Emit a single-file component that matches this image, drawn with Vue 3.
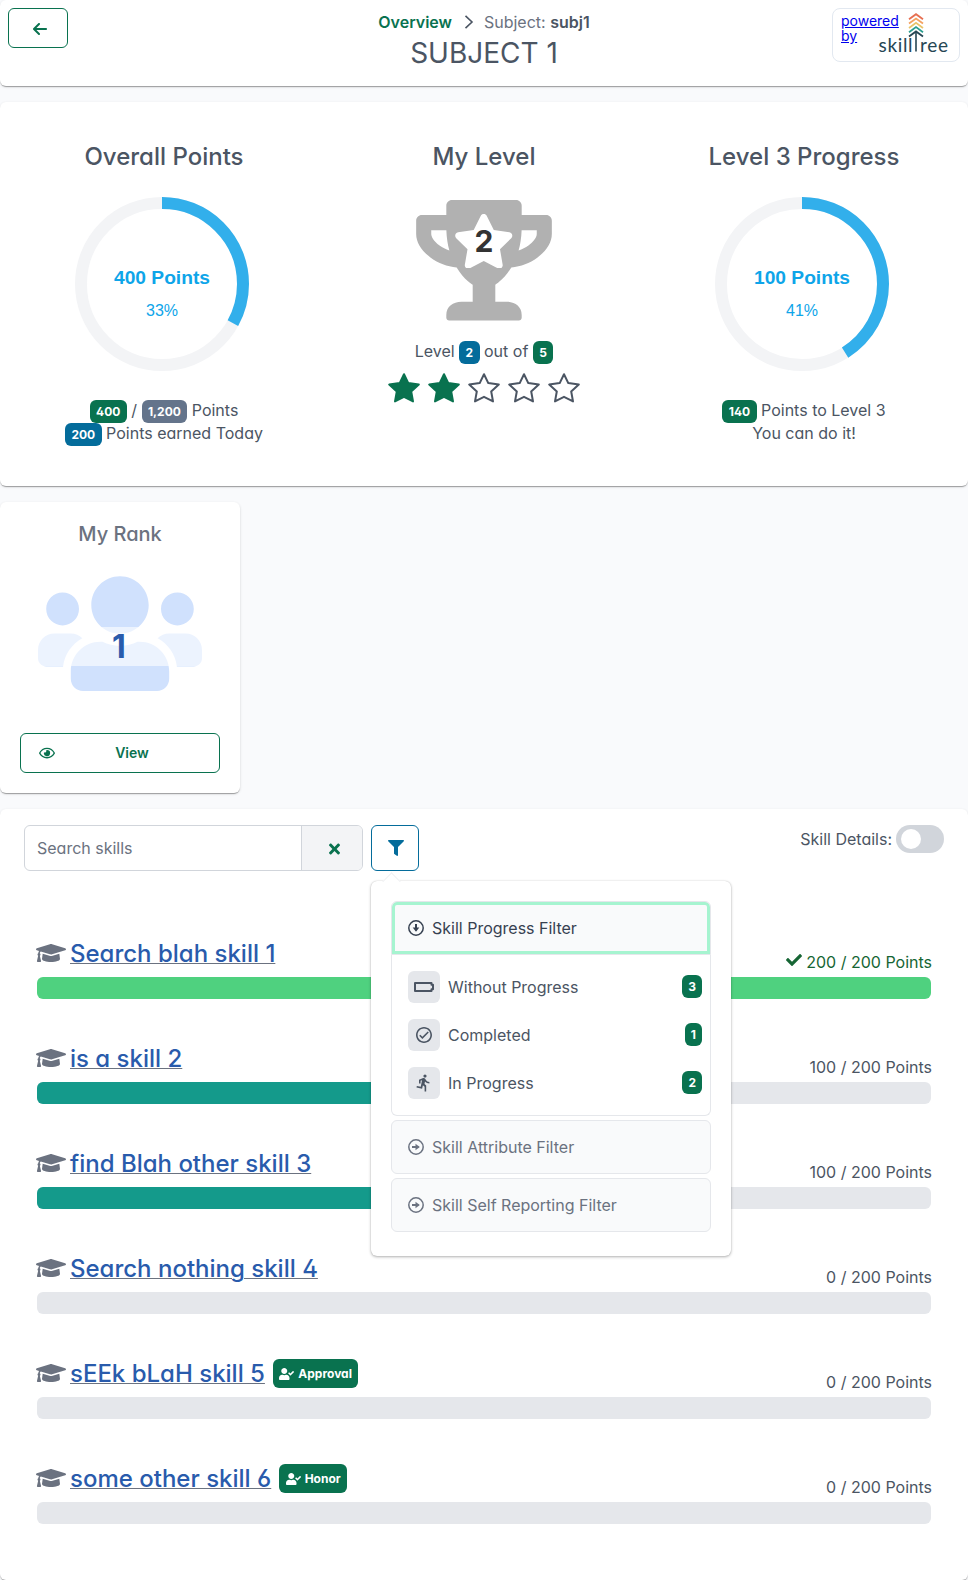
<script setup>
const ringRadius = 81
const ringLength = 2 * Math.PI * ringRadius

const points = { title: 'Overall Points', value: '400 Points', percent: 33 }
const progress = { title: 'Level 3 Progress', value: '100 Points', percent: 41 }

const skills = [
  { name: 'Search blah skill 1', earned: 200, percent: 100 },
  { name: 'is a skill 2', earned: 100, percent: 50 },
  { name: 'find Blah other skill 3', earned: 100, percent: 50 },
  { name: 'Search nothing skill 4', earned: 0, percent: 0 },
  { name: 'sEEk bLaH skill 5', earned: 0, percent: 0, tag: 'Approval' },
  { name: 'some other skill 6', earned: 0, percent: 0, tag: 'Honor' },
]

const filters = [
  { label: 'Without Progress', count: 3, icon: 'battery' },
  { label: 'Completed', count: 1, icon: 'check' },
  { label: 'In Progress', count: 2, icon: 'run' },
]

const logoChevrons = [
  { y: 0, color: '#e76f51' },
  { y: 4.3, color: '#f4a261' },
  { y: 8.6, color: '#e9c46a' },
  { y: 12.9, color: '#2a9d8f' },
  { y: 17.2, color: '#264653' },
]

const dash = (percent) => `${(ringLength * percent) / 100} ${ringLength}`
</script>

<template>
  <div class="page">
    <header class="card top">
      <button class="outline back" aria-label="Back">
        <svg width="14" height="16" viewBox="0 0 448 512" fill="currentColor"><path d="M9.4 233.4c-12.5 12.5-12.5 32.8 0 45.3l160 160c12.5 12.5 32.8 12.5 45.3 0s12.5-32.8 0-45.3L109.2 288 416 288c17.7 0 32-14.3 32-32s-14.3-32-32-32l-306.7 0L214.6 118.6c12.5-12.5 12.5-32.8 0-45.3s-32.8-12.5-45.3 0l-160 160z"/></svg>
      </button>
      <div class="heading">
        <nav class="crumbs">
          <a class="crumb-link">Overview</a>
          <svg class="crumb-sep" width="10" height="16" viewBox="0 0 10 16" fill="none" stroke="#4b5563" stroke-width="1.6"><path d="M1.5 1.8 8 8l-6.500 6.200"/></svg>
          <span>Subject: <b>subj1</b></span>
        </nav>
        <h1>SUBJECT 1</h1>
      </div>
      <a class="powered">
        <span class="powered-text">powered<br>by</span>
        <svg class="logo" width="72" height="42" viewBox="0 0 72 42">
          <g fill="none" stroke-width="1.8">
            <path v-for="c in logoChevrons" :key="c.color" :stroke="c.color" :transform="`translate(0 ${c.y})`" d="M31 6.300 38 1.200 45 6.300"/>
            <path d="M38 19v19.500" stroke="#264653" stroke-width="1.6"/>
          </g>
          <text x="0.500" y="38.500" textLength="34" class="logo-text">skill</text>
          <text x="42" y="38.500" textLength="28" class="logo-text">ree</text>
        </svg>
      </a>
    </header>

    <section class="card summary">
      <div class="col">
        <h2>{{ points.title }}</h2>
        <svg class="ring" width="176" height="176" viewBox="0 0 176 176">
          <circle cx="88" cy="88" :r="ringRadius" fill="none" stroke="#f3f4f6" stroke-width="12"/>
          <circle cx="88" cy="88" :r="ringRadius" fill="none" stroke="#32afeb" stroke-width="12" :stroke-dasharray="dash(points.percent)" transform="rotate(-90 88 88)"/>
          <text x="88" y="88" class="ring-value">{{ points.value }}</text>
          <text x="88" y="120" class="ring-percent">{{ points.percent }}%</text>
        </svg>
        <div class="notes">
          <div><span class="tag">400</span> / <span class="tag slate">1,200</span> Points</div>
          <div><span class="tag blue">200</span> Points earned Today</div>
        </div>
      </div>

      <div class="col">
        <h2>My Level</h2>
        <div class="trophy">
          <svg width="136" height="120.600" viewBox="0 0 576 512" fill="#b1b1b1"><path d="M552 64H448V24c0-13.300-10.700-24-24-24H152c-13.300 0-24 10.700-24 24v40H24C10.700 64 0 74.700 0 88v56c0 35.700 22.500 72.400 61.900 100.700 31.500 22.700 69.800 37.100 110 41.700C203.300 338.500 240 360 240 360v72h-48c-35.300 0-64 20.700-64 56v12c0 6.600 5.400 12 12 12h296c6.600 0 12-5.400 12-12v-12c0-35.300-28.700-56-64-56h-48v-72s36.700-21.500 68.100-73.600c40.300-4.600 78.600-19 110-41.700 39.300-28.300 61.900-65 61.900-100.700V88c0-13.300-10.700-24-24-24zM99.300 192.800C74.900 175.200 64 155.600 64 144v-16h64.200c1 32.600 5.800 61.200 12.800 86.200-15.100-5.200-29.200-12.400-41.700-21.400zM512 144c0 16.100-17.700 36.100-35.300 48.800-12.500 9-26.700 16.200-41.800 21.400 7-25 11.800-53.600 12.800-86.200H512v16z"/></svg>
          <svg class="trophy-star" width="61.500" height="54.700" viewBox="0 0 576 512" fill="#fff"><path d="M259.300 17.800L194 150.200 47.900 171.500c-26.200 3.800-36.700 36.100-17.700 54.600l105.700 103-25 145.500c-4.500 26.300 23.200 46 46.400 33.700L288 439.600l130.700 68.700c23.200 12.200 50.900-7.400 46.400-33.700l-25-145.500 105.700-103c19-18.500 8.500-50.800-17.700-54.600L382 150.200 316.700 17.800c-11.700-23.600-45.600-23.900-57.400 0z"/></svg>
          <span class="trophy-number">2</span>
        </div>
        <div class="level">Level <span class="tag blue">2</span> out of <span class="tag">5</span></div>
        <div class="stars">
          <svg v-for="n in 5" :key="n" width="32" height="32" viewBox="0 0 32 32" :fill="n <= 2 ? '#09724f' : 'none'" :stroke="n <= 2 ? '#09724f' : '#4b5563'" stroke-width="2" stroke-linejoin="round"><path d="M16 2.200 20.300 11.100 30.800 12.600 23.200 19.500 25 29.400 16 24.800 7 29.400 8.800 19.500 1.200 12.600 11.700 11.100Z"/></svg>
        </div>
      </div>

      <div class="col">
        <h2>{{ progress.title }}</h2>
        <svg class="ring" width="176" height="176" viewBox="0 0 176 176">
          <circle cx="88" cy="88" :r="ringRadius" fill="none" stroke="#f3f4f6" stroke-width="12"/>
          <circle cx="88" cy="88" :r="ringRadius" fill="none" stroke="#32afeb" stroke-width="12" :stroke-dasharray="dash(progress.percent)" transform="rotate(-90 88 88)"/>
          <text x="88" y="88" class="ring-value">{{ progress.value }}</text>
          <text x="88" y="120" class="ring-percent">{{ progress.percent }}%</text>
        </svg>
        <div class="notes">
          <div><span class="tag">140</span> Points to Level 3</div>
          <div>You can do it!</div>
        </div>
      </div>
    </section>

    <section class="card rank">
      <h3>My Rank</h3>
      <div class="people">
        <svg width="164" height="131.200" viewBox="0 0 640 512" fill="#d0e1fd"><path d="M96 224c35.300 0 64-28.700 64-64s-28.700-64-64-64-64 28.700-64 64 28.700 64 64 64zm448 0c35.300 0 64-28.700 64-64s-28.700-64-64-64-64 28.700-64 64 28.700 64 64 64zm32 32h-64c-17.600 0-33.500 7.100-45.100 18.600 40.300 22.100 68.900 62 75.100 109.400h66c17.700 0 32-14.300 32-32v-32c0-35.300-28.700-64-64-64zm-256 0c61.900 0 112-50.100 112-112S381.900 32 320 32 208 82.100 208 144s50.100 112 112 112zm76.800 32h-8.300c-20.800 10-43.900 16-68.500 16s-47.600-6-68.500-16h-8.300C179.600 288 128 339.600 128 403.200V432c0 26.500 21.500 48 48 48h288c26.500 0 48-21.500 48-48v-28.800c0-63.600-51.600-115.200-115.200-115.200zm-223.700-13.400C161.500 263.100 145.600 256 128 256H64c-35.300 0-64 28.700-64 64v32c0 17.700 14.300 32 32 32h65.900c6.300-47.400 34.900-87.300 75.200-109.400z"/></svg>
        <span class="rank-number">1</span>
      </div>
      <button class="outline view">
        <svg width="16" height="14.200" viewBox="0 0 576 512" fill="currentColor"><path d="M288 144a110.940 110.940 0 0 0-31.240 5 55.400 55.400 0 0 1 7.240 27 56 56 0 0 1-56 56 55.400 55.400 0 0 1-27-7.240A111.710 111.710 0 1 0 288 144zm284.520 97.400C518.290 135.590 410.930 64 288 64S57.680 135.640 3.480 241.410a32.350 32.350 0 0 0 0 29.190C57.710 376.410 165.070 448 288 448s230.320-71.640 284.520-177.410a32.350 32.350 0 0 0 0-29.190zM288 400c-98.650 0-189.090-55-237.930-144C98.910 167 189.340 112 288 112s189.090 55 237.930 144C477.100 345 386.660 400 288 400z"/></svg>
        <span>View</span>
      </button>
    </section>

    <section class="card skills">
      <div class="toolbar">
        <div class="search">
          <div class="field">Search skills</div>
          <button class="clear" aria-label="Clear search">
            <svg width="11" height="16" viewBox="0 0 352 512" fill="currentColor"><path d="M242.720 256l100.070-100.070c12.280-12.280 12.280-32.190 0-44.480l-22.240-22.240c-12.280-12.280-32.190-12.280-44.480 0L176 189.280 75.930 89.210c-12.280-12.280-32.190-12.280-44.480 0L9.210 111.450c-12.280 12.280-12.280 32.190 0 44.480L109.280 256 9.210 356.070c-12.280 12.280-12.280 32.190 0 44.480l22.240 22.240c12.280 12.280 32.200 12.280 44.480 0L176 322.720l100.070 100.070c12.280 12.280 32.200 12.280 44.480 0l22.240-22.240c12.280-12.280 12.280-32.190 0-44.480L242.720 256z"/></svg>
          </button>
        </div>
        <div class="filter-anchor">
          <button class="filter" aria-label="Filter skills">
            <svg width="16" height="16" viewBox="0 0 512 512" fill="currentColor"><path d="M487.976 0H24.028C2.710 0-8.047 25.866 7.058 40.971L192 225.941V432c0 7.831 3.821 15.170 10.237 19.662l80 55.980C298.020 518.690 320 507.493 320 487.980V225.941l184.947-184.970C520.021 25.896 509.338 0 487.976 0z"/></svg>
          </button>
          <div class="popover">
            <div class="panel-header open">
              <svg width="16" height="16" viewBox="0 0 16 16" fill="none" stroke="currentColor" stroke-width="1.500"><circle cx="8" cy="8" r="7.200"/><path d="M8 4v6.500" stroke-width="2"/><path d="M4.700 7.500h6.600L8 11.800z" fill="currentColor" stroke="none"/></svg>
              Skill Progress Filter
            </div>
            <div class="panel-body">
              <div v-for="f in filters" :key="f.label" class="option">
                <span class="option-icon">
                  <svg v-if="f.icon === 'battery'" width="22" height="12" viewBox="0 0 22 12" fill="none" stroke="currentColor" stroke-width="2" stroke-linejoin="round"><path d="M2 2h16.500v1.800h1.500v4.400h-1.500V10H2z"/></svg>
                  <svg v-else-if="f.icon === 'check'" width="16" height="16" viewBox="2 2 20 20" fill="currentColor"><path d="M12 2C6.500 2 2 6.500 2 12S6.500 22 12 22 22 17.500 22 12 17.500 2 12 2M12 20C7.590 20 4 16.410 4 12S7.590 4 12 4 20 7.590 20 12 16.410 20 12 20M16.590 7.580L10 14.170L7.410 11.590L6 13L10 17L18 9L16.590 7.580Z"/></svg>
                  <svg v-else width="18" height="18" viewBox="1 1 22.500 22.500" fill="currentColor"><path d="M13.490 5.480c1.100 0 2-.9 2-2s-.9-2-2-2-2 .9-2 2 .9 2 2 2zm-3.600 13.900l1-4.400 2.100 2v6h2v-7.500l-2.100-2 .6-3c1.300 1.500 3.300 2.500 5.500 2.500v-2c-1.900 0-3.500-1-4.300-2.400l-1-1.600c-.4-.6-1-1-1.700-1-.3 0-.5.1-.8.1l-5.200 2.200v4.700h2v-3.400l1.800-.7-1.600 8.100-4.900-1-.4 2 7 1.400z"/></svg>
                </span>
                <span class="option-label">{{ f.label }}</span>
                <span class="tag">{{ f.count }}</span>
              </div>
            </div>
            <div v-for="label in ['Skill Attribute Filter', 'Skill Self Reporting Filter']" :key="label" class="panel-header">
              <svg width="16" height="16" viewBox="0 0 16 16" fill="none" stroke="currentColor" stroke-width="1.500"><circle cx="8" cy="8" r="7.200"/><path d="M4 8h6.500" stroke-width="2"/><path d="M7.500 4.700v6.600L11.800 8z" fill="currentColor" stroke="none"/></svg>
              {{ label }}
            </div>
          </div>
        </div>
        <div class="details">Skill Details: <span class="switch"></span></div>
      </div>

      <div class="list">
        <div v-for="s in skills" :key="s.name" class="skill">
          <div class="skill-head">
            <svg class="cap" width="30" height="24" viewBox="0 0 640 512" fill="#6b7280"><path d="M622.340 153.200L343.400 67.500c-15.200-4.670-31.600-4.670-46.790 0L17.660 153.200c-23.540 7.230-23.540 38.360 0 45.590l48.630 14.940c-10.670 13.190-17.230 29.280-17.880 46.900C38.780 266.150 32 276.110 32 288c0 10.780 5.680 19.850 13.860 25.650L20.330 428.530C18.110 438.520 25.710 448 35.940 448h56.110c10.240 0 17.840-9.480 15.620-19.470L82.140 313.650C90.320 307.850 96 298.780 96 288c0-11.570-6.470-21.250-15.660-26.870.76-15.020 8.440-28.300 20.690-36.720L296.600 284.500c9.060 2.780 26.440 6.250 46.790 0l278.950-85.700c23.550-7.240 23.550-38.360 0-45.600zM352.790 315.090c-28.530 8.760-52.840 3.920-65.590 0l-145.020-44.550L128 384c0 35.350 85.960 64 192 64s192-28.650 192-64l-14.180-113.470-145.030 44.560z"/></svg>
            <a class="skill-name">{{ s.name }}</a>
            <span v-if="s.tag" class="tag big">
              <svg width="15" height="12" viewBox="0 0 640 512" fill="currentColor"><path d="M224 256c70.700 0 128-57.300 128-128S294.700 0 224 0 96 57.300 96 128s57.300 128 128 128zm89.600 32h-16.700c-22.200 10.200-46.900 16-72.900 16s-50.600-5.800-72.900-16h-16.700C60.200 288 0 348.200 0 422.400V464c0 26.500 21.500 48 48 48h352c26.500 0 48-21.500 48-48v-41.600c0-74.200-60.200-134.400-134.400-134.400zm323-128.400l-27.800-28.100c-4.600-4.700-12.100-4.700-16.800-.1l-104.800 104-45.500-45.800c-4.600-4.700-12.100-4.700-16.800-.1l-28.100 27.900c-4.700 4.600-4.700 12.100-.1 16.800l81.700 82.300c4.600 4.700 12.100 4.700 16.800.1l141.300-140.200c4.600-4.700 4.600-12.200.1-16.800z"/></svg>
              {{ s.tag }}
            </span>
            <span class="score" :class="{ done: s.percent === 100 }">
              <svg v-if="s.percent === 100" width="16" height="16" viewBox="0 0 512 512" fill="currentColor"><path d="M173.898 439.404l-166.400-166.400c-9.997-9.997-9.997-26.206 0-36.204l36.203-36.204c9.997-9.998 26.207-9.998 36.204 0L192 312.690 432.095 72.596c9.997-9.997 26.207-9.997 36.204 0l36.203 36.204c9.997 9.997 9.997 26.206 0 36.204l-294.400 294.401c-9.998 9.997-26.207 9.997-36.204-.001z"/></svg>
              {{ s.earned }} / 200 Points
            </span>
          </div>
          <div class="bar"><div class="fill" :class="{ done: s.percent === 100 }" :style="{ width: s.percent + '%' }"></div></div>
        </div>
      </div>
    </section>
  </div>
</template>

<style>
body {
  background: #f9fafc;
}
</style>

<style scoped>
.page {
  height: 1580px;
  display: flex;
  flex-direction: column;
  gap: 16px;
  box-sizing: border-box;
  overflow: hidden;
  background: #f9fafc;
  color: #4b5563;
  font-family: Inter, "Liberation Sans", sans-serif;
  font-feature-settings: "cv02", "cv03", "cv04", "cv11";
  font-size: 16px;
  line-height: 24px;
}
.page * {
  box-sizing: border-box;
}
h1, h2, h3 {
  margin: 0;
}
button {
  font: inherit;
  font-feature-settings: inherit;
  padding: 0;
  margin: 0;
}
svg {
  display: block;
  flex: none;
}
.card {
  flex: none;
  background: #fff;
  border-radius: 6px;
  box-shadow: 0 2px 1px -1px rgba(0, 0, 0, 0.2), 0 1px 1px 0 rgba(0, 0, 0, 0.14), 0 1px 3px 0 rgba(0, 0, 0, 0.12);
}
.outline {
  display: flex;
  align-items: center;
  background: transparent;
  border: 1px solid #09724f;
  border-radius: 6px;
  color: #09724f;
}

/* top bar */
.top {
  height: 86px;
  padding: 8px;
  display: grid;
  grid-template-columns: 1fr auto 1fr;
  align-items: start;
}
.back {
  width: 60px;
  height: 40px;
  justify-content: center;
  padding: 1px 0 0 4px;
}
.heading {
  display: flex;
  flex-direction: column;
  align-items: center;
  padding-top: 2px;
}
.crumbs {
  display: flex;
  align-items: center;
  color: #6b7280;
}
.crumb-link {
  color: #09724f;
  font-weight: 600;
}
.crumb-sep {
  margin: 0 10px 0 12px;
}
.crumbs b {
  color: #4b5563;
  font-weight: 600;
}
h1 {
  margin-top: 1px;
  font-size: 28px;
  line-height: 36px;
  font-weight: 400;
}
.powered {
  justify-self: end;
  width: 128px;
  height: 54px;
  border: 1px solid #e2e8f0;
  border-radius: 8px;
  display: flex;
  padding-left: 8px;
}
.powered-text {
  width: 37px;
  padding-top: 4px;
  font-size: 14px;
  line-height: 15px;
  color: #0000ee;
  text-decoration: underline;
  font-feature-settings: normal;
}
.logo {
  margin-top: 4px;
}
.logo-text {
  font-family: Lato, sans-serif;
  font-size: 19px;
  fill: #264653;
}

/* summary */
.summary {
  height: 384px;
  padding: 0 4px;
  display: grid;
  grid-template-columns: repeat(3, 1fr);
}
.col {
  display: flex;
  flex-direction: column;
  align-items: center;
}
h2 {
  margin-top: 40px;
  font-size: 24px;
  line-height: 30px;
  font-weight: 500;
}
.ring {
  margin-top: 24px;
  margin-right: 4px;
}
.ring-value {
  font: 700 19.2px "Liberation Sans", Arial, sans-serif;
  fill: #0ea5e9;
  text-anchor: middle;
}
.ring-percent {
  font: 400 16px "Liberation Sans", Arial, sans-serif;
  fill: #0ea5e9;
  text-anchor: middle;
}
.notes {
  margin-top: 27px;
  line-height: 23px;
  text-align: center;
}
.tag {
  display: inline-block;
  vertical-align: top;
  height: 23px;
  margin: 1px 0 -1px;
  padding: 0 6.4px;
  border-radius: 6px;
  background: #09724f;
  color: #fff;
  font-size: 12px;
  line-height: 23px;
  font-weight: 700;
}
.tag.slate {
  background: #64748b;
}
.tag.blue {
  background: #046c9b;
}
.trophy {
  position: relative;
  margin-top: 28px;
}
.trophy-star {
  position: absolute;
  left: 37px;
  top: 13.500px;
}
.trophy-number {
  position: absolute;
  inset: 26px 0 auto;
  text-align: center;
  font-size: 30px;
  line-height: 30px;
  font-weight: 700;
  color: #333;
}
.level {
  margin-top: 19px;
  line-height: 23px;
}
.stars {
  margin-top: 9px;
  display: flex;
  gap: 8px;
}

/* rank */
.rank {
  width: 240px;
  height: 291px;
  padding: 0 20px;
  display: flex;
  flex-direction: column;
  align-items: center;
}
h3 {
  margin-top: 20px;
  font-size: 20px;
  line-height: 24px;
  font-weight: 500;
  color: #6b7280;
}
.people {
  position: relative;
  margin-top: 22px;
  height: 165px;
}
.rank-number {
  position: absolute;
  left: 0;
  right: 0;
  top: 59px;
  height: 39px;
  padding-right: 2px;
  line-height: 40px;
  text-align: center;
  font-size: 32px;
  font-weight: 700;
  color: #295bac;
  background: rgba(255, 255, 255, 0.6);
}
.view {
  width: 200px;
  height: 40px;
  padding-left: 18px;
  font-size: 14px;
  font-weight: 600;
}
.view span {
  flex: 1;
  padding-right: 10px;
  text-align: center;
}

/* skills */
.skills {
  height: 771px;
  padding: 16px 24px;
}
.toolbar {
  display: flex;
  height: 46px;
}
.search {
  display: flex;
  width: 339px;
  border: 1px solid #d1d5db;
  border-radius: 6px;
  overflow: hidden;
}
.field {
  flex: 1;
  padding-left: 12px;
  line-height: 45px;
  color: #6b7280;
}
.clear {
  width: 61px;
  border: 0;
  border-left: 1px solid #d1d5db;
  background: #f3f4f6;
  color: #09724f;
  display: flex;
  align-items: center;
  justify-content: center;
  padding: 2px 0 0 5px;
}
.filter-anchor {
  position: relative;
  margin-left: 8px;
}
.filter {
  width: 48px;
  height: 46px;
  padding-left: 1px;
  border: 1px solid #046c9b;
  border-radius: 6px;
  background: #fff;
  color: #046c9b;
  display: flex;
  align-items: center;
  justify-content: center;
}
.details {
  margin-left: auto;
  display: flex;
  align-items: center;
  gap: 4px;
  height: 28px;
}
.switch {
  width: 48px;
  height: 28px;
  border-radius: 14px;
  background: #d1d5db;
  padding: 4px 5px;
}
.switch::before {
  content: "";
  display: block;
  width: 20px;
  height: 20px;
  border-radius: 50%;
  background: #fff;
}

/* filter popover */
.popover {
  position: absolute;
  z-index: 2;
  left: 0;
  top: 56px;
  width: 360px;
  height: 375px;
  padding: 20px;
  background: #fff;
  border-radius: 6px;
  box-shadow: 0 1px 3px rgba(0, 0, 0, 0.3), 0 0 1px rgba(0, 0, 0, 0.2);
}
.popover::before {
  content: "";
  position: absolute;
  left: 14px;
  top: -6px;
  width: 12px;
  height: 12px;
  background: #fff;
  border: solid #f0f1f3;
  border-width: 1px 0 0 1px;
  transform: rotate(45deg);
}
.panel-header {
  height: 54px;
  margin-bottom: 4px;
  padding-left: 16px;
  display: flex;
  align-items: center;
  gap: 8px;
  border: 1px solid #e5e7eb;
  border-radius: 6px;
  background: #f9fafb;
  color: #6b7280;
}
.panel-header.open {
  margin: 0;
  color: #374151;
  border-radius: 6px 6px 0 0;
  box-shadow: inset 0 0 0 3px #a6f4d0;
}
.panel-body {
  height: 161px;
  margin-bottom: 4px;
  padding: 8px 8px 8px 16px;
  border: 1px solid #e5e7eb;
  border-top: 0;
  border-radius: 0 0 6px 6px;
}
.option {
  height: 48px;
  display: flex;
  align-items: center;
}
.option .tag {
  margin: 0 0 1px;
  padding: 0 6px;
}
.option-icon {
  width: 32px;
  height: 32px;
  margin-right: 8px;
  border-radius: 6px;
  background: #e5e7eb;
  display: flex;
  align-items: center;
  justify-content: center;
}
.option-label {
  flex: 1;
}

/* skill list */
.list {
  padding: 61px 13px 0;
}
.skill {
  height: 105px;
}
.skill-head {
  height: 45px;
  display: flex;
  align-items: flex-start;
}
.cap {
  margin: 9px 4px 0 -1px;
}
.skill-name {
  margin-top: 7px;
  font-size: 24px;
  line-height: 30px;
  font-weight: 500;
  color: #295bac;
  text-decoration: underline;
  text-decoration-color: #6b7280;
  text-decoration-thickness: 1px;
}
.tag.big {
  height: 29px;
  margin: 7px 0 0 8px;
  padding: 0 6.4px;
  display: flex;
  align-items: center;
  gap: 4px;
}
.score {
  margin-left: auto;
  margin-top: 18px;
  margin-right: -1px;
  display: flex;
  gap: 4px;
}
.score svg {
  margin-top: 2px;
}
.score.done {
  color: #166534;
}
.bar {
  height: 22px;
  border-radius: 6px;
  background: #e5e7eb;
  overflow: hidden;
}
.fill {
  height: 100%;
  background: #149a8b;
}
.fill.done {
  background: #4fd17f;
}
</style>
